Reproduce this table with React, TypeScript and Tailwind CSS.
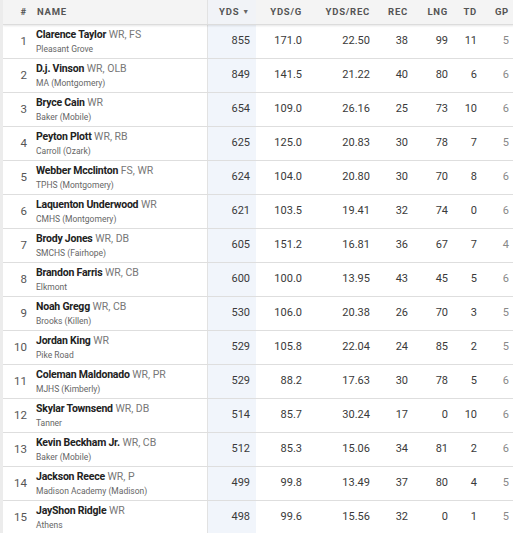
import React from "react";

type Row = [number, string, string, string, string, string, string, string, string, string, string];

const rows: Row[] = [
  [1, "Clarence Taylor", "WR, FS", "Pleasant Grove", "855", "171.0", "22.50", "38", "99", "11", "5"],
  [2, "D.j. Vinson", "WR, OLB", "MA (Montgomery)", "849", "141.5", "21.22", "40", "80", "6", "6"],
  [3, "Bryce Cain", "WR", "Baker (Mobile)", "654", "109.0", "26.16", "25", "73", "10", "6"],
  [4, "Peyton Plott", "WR, RB", "Carroll (Ozark)", "625", "125.0", "20.83", "30", "78", "7", "5"],
  [5, "Webber Mcclinton", "FS, WR", "TPHS (Montgomery)", "624", "104.0", "20.80", "30", "70", "8", "6"],
  [6, "Laquenton Underwood", "WR", "CMHS (Montgomery)", "621", "103.5", "19.41", "32", "74", "0", "6"],
  [7, "Brody Jones", "WR, DB", "SMCHS (Fairhope)", "605", "151.2", "16.81", "36", "67", "7", "4"],
  [8, "Brandon Farris", "WR, CB", "Elkmont", "600", "100.0", "13.95", "43", "45", "5", "6"],
  [9, "Noah Gregg", "WR, CB", "Brooks (Killen)", "530", "106.0", "20.38", "26", "70", "3", "5"],
  [10, "Jordan King", "WR", "Pike Road", "529", "105.8", "22.04", "24", "85", "2", "5"],
  [11, "Coleman Maldonado", "WR, PR", "MJHS (Kimberly)", "529", "88.2", "17.63", "30", "78", "5", "6"],
  [12, "Skylar Townsend", "WR, DB", "Tanner", "514", "85.7", "30.24", "17", "0", "10", "6"],
  [13, "Kevin Beckham Jr.", "WR, CB", "Baker (Mobile)", "512", "85.3", "15.06", "34", "81", "2", "6"],
  [14, "Jackson Reece", "WR, P", "Madison Academy (Madison)", "499", "99.8", "13.49", "37", "80", "4", "5"],
  [15, "JayShon Ridgle", "WR", "Athens", "498", "99.6", "15.56", "32", "0", "1", "5"],
];

const grid = "grid grid-cols-[33px_171px_49px_52px_68px_38px_40px_29px_31px]";

export default function App() {
  return (
    <div
      className="w-[513px] h-[533px] overflow-hidden bg-white border-l-[3px] border-[#ececec]"
      style={{ fontFamily: "Roboto, 'Liberation Sans', sans-serif" }}
    >
      <div className="w-[511px]">
        <div className={`${grid} relative z-10 h-[25px] bg-[#f4f4f4] border-b border-[#dcdcdc] shadow-[0_1px_2px_rgba(0,0,0,0.10)] text-[9.5px] font-bold tracking-[0.08em] text-[#555] items-center`}>
          <div className="text-right pr-[9px]">#</div>
          <div className="pl-px">NAME</div>
          <div className="h-full flex items-center justify-end pr-[6px] bg-[#f1f3f7] border-l border-[#e2e2e2]">
            YDS<span className="ml-[3px] text-[7px] text-[#666]">▼</span>
          </div>
          <div className="text-right pr-[6px]">YDS/G</div>
          <div className="text-right pr-[6px]">YDS/REC</div>
          <div className="text-right pr-[6px]">REC</div>
          <div className="text-right pr-[6px]">LNG</div>
          <div className="text-right pr-[6px]">TD</div>
          <div className="text-right pr-[5px]">GP</div>
        </div>
        {rows.map((r) => (
          <div key={r[0]} className={`${grid} h-[34px] border-b border-[#dedede] text-[11px] text-[#3a3a3a] items-center`}>
            <div className="text-right pr-[9px] text-[#555] text-[11.5px]">{r[0]}</div>
            <div className="flex flex-col justify-center">
              <div className="leading-[14px] text-[10.5px] whitespace-nowrap">
                <span className="font-bold text-[#222] tracking-[-0.02em]">{r[1]}</span>
                <span className="text-[#777]"> {r[2]}</span>
              </div>
              <div className="leading-[12px] text-[8.5px] text-[#666] whitespace-nowrap mt-px">{r[3]}</div>
            </div>
            <div className="h-full flex items-center justify-end pr-[6px] bg-[#f1f5fb] border-l border-[#e2e2e2]">{r[4]}</div>
            <div className="text-right pr-[6px]">{r[5]}</div>
            <div className="text-right pr-[6px]">{r[6]}</div>
            <div className="text-right pr-[6px]">{r[7]}</div>
            <div className="text-right pr-[6px]">{r[8]}</div>
            <div className="text-right pr-[6px]">{r[9]}</div>
            <div className="text-right pr-[5px] text-[#888]">{r[10]}</div>
          </div>
        ))}
      </div>
    </div>
  );
}
